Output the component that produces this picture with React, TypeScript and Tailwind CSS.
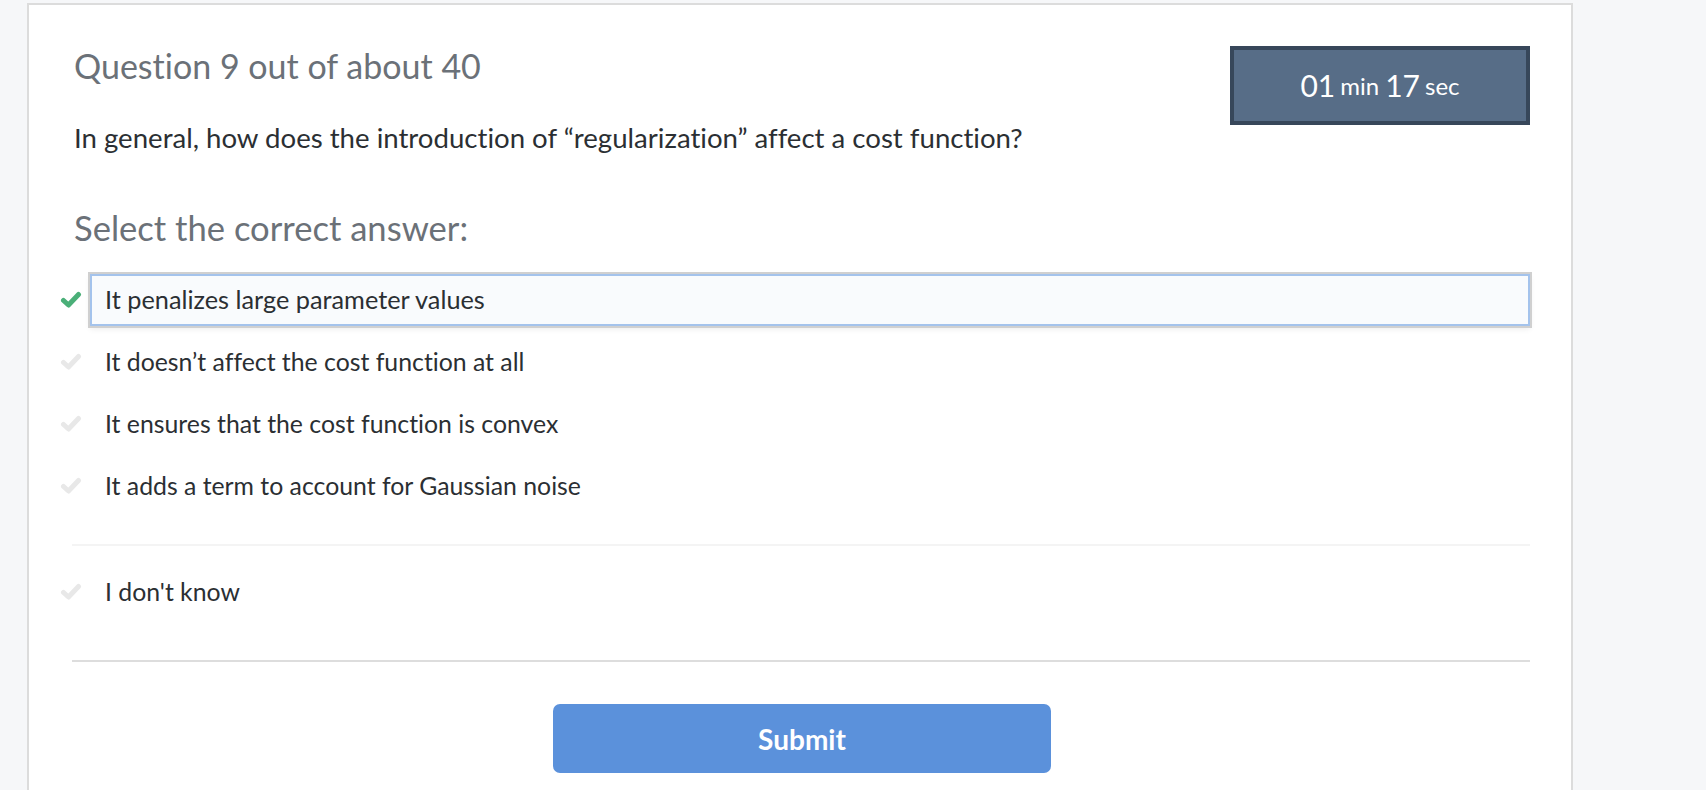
const options = [
  "It penalizes large parameter values",
  "It doesn’t affect the cost function at all",
  "It ensures that the cost function is convex",
  "It adds a term to account for Gaussian noise",
];

const Check = ({ color }: { color: string }) => (
  <svg viewBox="0 0 22 18" className="w-[22px] h-[18px] shrink-0">
    <polyline points="3.5,9.5 8.5,14 18.5,3.5" fill="none" stroke={color} strokeWidth="5" strokeLinecap="round" strokeLinejoin="round" />
  </svg>
);

const OptionRow = ({ text, selected }: { text: string; selected?: boolean }) => {
  return (
    <div className="flex items-center h-[52px] -ml-[14px]">
      <Check color={selected ? "#4aaf78" : "#e8e8e8"} />
      <div
        className={`ml-[8px] flex-1 h-full flex items-center pl-[13px] border-2 ${
          selected
            ? "border-[#a4c3ec] bg-[#f9fbfd] shadow-[0_0_0_2px_#d0d0d0,0_3px_6px_rgba(0,0,0,0.08)]"
            : "border-transparent"
        }`}
      >
        <span className={`${selected ? "text-[25.3px]" : "text-[24.8px]"} text-[#2b2f33]`}>{text}</span>
      </div>
    </div>
  );
};

export default function App() {
  return (
    <div className="min-h-screen bg-[#f6f7f9] font-['Lato','Liberation_Sans',sans-serif] [font-variant-ligatures:none] overflow-hidden">
      <div className="ml-[27px] mt-[3px] w-[1546px] h-[820px] border-2 border-[#dcdcdc] bg-white pt-[41px] pl-[45px] pr-[41px]">
        <div className="flex items-start justify-between">
          <div>
            <h1 className="text-[34px] leading-[40px] text-[#6b7178]">Question 9 out of about 40</h1>
            <p className="mt-[36px] text-[27.6px] leading-[32px] text-[#2b2f33]">
              In general, how does the introduction of “regularization” affect a cost function?
            </p>
            <h2 className="mt-[54px] text-[34.6px] leading-[40px] text-[#6b7178]">Select the correct answer:</h2>
          </div>
          <div className="w-[300px] h-[79px] shrink-0 border-4 border-[#37475a] bg-[#576d87] flex items-center justify-center text-white">
            <span className="text-[30px]">01</span>
            <span className="text-[24px] ml-[5px]">min</span>
            <span className="text-[30px] ml-[6px]">17</span>
            <span className="text-[24px] ml-[5px]">sec</span>
          </div>
        </div>

        <div className="mt-[26px] flex flex-col gap-[10px]">
          {options.map((o, i) => (
            <OptionRow key={o} text={o} selected={i === 0} />
          ))}
        </div>

        <div className="mt-[32px] h-[2px] bg-[#f4f4f4] -ml-[2px]" />

        <div className="mt-[20px]">
          <OptionRow text="I don't know" />
        </div>

        <div className="mt-[42px] h-[2px] bg-[#dddddd] -ml-[2px]" />

        <div className="mt-[42px] flex justify-center">
          <button className="w-[498px] h-[69px] rounded-[7px] bg-[#5b91db] text-white text-[28px] font-bold">
            Submit
          </button>
        </div>
      </div>
    </div>
  );
}
